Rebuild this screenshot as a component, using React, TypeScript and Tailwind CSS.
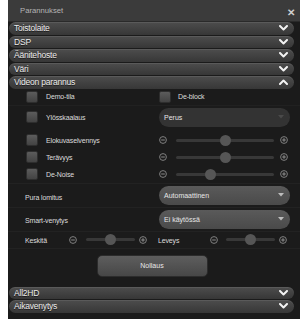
import React from "react";

const font = { fontFamily: '"Liberation Sans", Arial, sans-serif' };

function Chevron({ up = false }: { up?: boolean }) {
  return (
    <svg width="9" height="6" viewBox="0 0 9 6" className="shrink-0">
      <polyline
        points={up ? "1,5 4.5,1.5 8,5" : "1,1 4.5,4.5 8,1"}
        fill="none"
        stroke="#f2f2f2"
        strokeWidth="2"
        strokeLinecap="round"
        strokeLinejoin="round"
      />
    </svg>
  );
}

function SectionRow({ title, open = false }: { title: string; open?: boolean }) {
  return (
    <div className="h-[12.5px] rounded-full bg-gradient-to-b from-[#4d4d4d] to-[#373737] flex items-center justify-between pl-[5px] pr-[6px] shadow-[inset_0_1px_0_rgba(255,255,255,0.08)]">
      <span className="text-[8.5px] leading-none text-[#ececec] tracking-[-0.2px] [text-shadow:0_1px_0_rgba(0,0,0,0.6)]">
        {title}
      </span>
      <Chevron up={open} />
    </div>
  );
}

function Checkbox() {
  return (
    <div className="w-[12px] h-[12px] rounded-[2px] bg-gradient-to-b from-[#5c5c5c] to-[#434343] border border-[#2e2e2e] shrink-0" />
  );
}

function Circle({ plus = false }: { plus?: boolean }) {
  return (
    <svg width="8" height="8" viewBox="0 0 8 8" className="shrink-0">
      <circle cx="4" cy="4" r="3.4" fill="none" stroke="#8a8a8a" strokeWidth="0.9" />
      <line x1="2.2" y1="4" x2="5.8" y2="4" stroke="#9a9a9a" strokeWidth="0.9" />
      {plus && <line x1="4" y1="2.2" x2="4" y2="5.8" stroke="#9a9a9a" strokeWidth="0.9" />}
    </svg>
  );
}

function Slider({ track, pos, gapL, gapR }: { track: string; pos: number; gapL: string; gapR: string }) {
  return (
    <div className="flex items-center">
      <Circle />
      <div className={`relative h-[3px] rounded-full bg-[#383838] ${track} ${gapL}`}>
        <div
          className="absolute top-1/2 w-[11px] h-[11px] -mt-[5.5px] -ml-[5.5px] rounded-full bg-[#565656]"
          style={{ left: `${pos * 100}%` }}
        />
      </div>
      <div className={gapR}>
        <Circle plus />
      </div>
    </div>
  );
}

function Dropdown({ value, dim = false }: { value: string; dim?: boolean }) {
  return (
    <div
      className={`w-[131px] h-[19px] rounded-full flex items-center justify-between pl-[5px] pr-[6px] ${
        dim ? "bg-[#333333]" : "bg-gradient-to-b from-[#5a5a5a] to-[#4a4a4a]"
      }`}
    >
      <span className="text-[7px] leading-none text-[#e6e6e6]">{value}</span>
      <svg width="6" height="4" viewBox="0 0 6 4">
        <polygon points="0,0 6,0 3,3.5" fill={dim ? "#4a4a4a" : "#bdbdbd"} />
      </svg>
    </div>
  );
}

function Label({ children }: { children: React.ReactNode }) {
  return <span className="text-[7px] leading-none text-[#dcdcdc] tracking-[-0.15px]">{children}</span>;
}

export default function App() {
  return (
    <div className="w-[303px] h-[323px] bg-white pl-[8px] pr-[3px] pb-[4px]" style={font}>
      <div className="h-full bg-[#1b1b1b] flex flex-col">
        <div className="h-[22px] shrink-0 bg-[#3b3b3b] border-b border-[#2a2a2a] flex items-start justify-between pl-[12px] pr-[5px]">
          <span className="mt-[7px] text-[7.7px] leading-none text-[#b4b4b4]">Parannukset</span>
          <span className="mt-[8px] text-[10px] leading-none font-bold text-[#cfcfcf]">✕</span>
        </div>

        <div className="flex flex-col gap-px pl-px pr-[6px]">
          <SectionRow title="Toistolaite" />
          <SectionRow title="DSP" />
          <SectionRow title="Äänitehoste" />
          <SectionRow title="Väri" />
          <SectionRow title="Videon parannus" open />
        </div>

        <div className="flex flex-col">
          <div className="h-[17px] flex items-center pl-[18px] border-b border-[#212121]">
            <div className="w-[133px] flex items-center gap-[8px]">
              <Checkbox />
              <Label>Demo-tila</Label>
            </div>
            <div className="flex items-center gap-[7px]">
              <Checkbox />
              <Label>De-block</Label>
            </div>
          </div>

          <div className="h-[26px] flex items-start pt-[2px] pl-[18px]">
            <div className="w-[133px] h-[19px] flex items-center gap-[8px]">
              <Checkbox />
              <Label>Ylösskaalaus</Label>
            </div>
            <Dropdown value="Perus" dim />
          </div>

          {["Elokuvaselvennys", "Terävyys", "De-Noise"].map((name, i) => (
            <div key={name} className="h-[17px] flex items-center pl-[18px]">
              <div className="w-[133px] flex items-center gap-[8px]">
                <Checkbox />
                <Label>{name}</Label>
              </div>
              <Slider track="w-[98px]" pos={i === 2 ? 0.35 : 0.5} gapL="ml-[9px]" gapR="ml-[6px]" />
            </div>
          ))}

          <div className="h-[24px] flex items-center pl-[17px] border-t border-[#222222]">
            <div className="w-[134px]">
              <Label>Pura lomitus</Label>
            </div>
            <Dropdown value="Automaattinen" />
          </div>

          <div className="h-[24px] flex items-center pl-[17px] border-t border-[#222222]">
            <div className="w-[134px] -mt-[2px]">
              <Label>Smart-venytys</Label>
            </div>
            <Dropdown value="Ei käytössä" />
          </div>

          <div className="h-[18px] flex items-center pl-[17px] border-t border-b border-[#222222]">
            <div className="w-[44px] -mt-[3px]">
              <Label>Keskitä</Label>
            </div>
            <Slider track="w-[49px]" pos={0.5} gapL="ml-[9px]" gapR="ml-[4px]" />
            <div className="w-[52px] ml-[11px] -mt-[3px]">
              <Label>Leveys</Label>
            </div>
            <Slider track="w-[49px]" pos={0.5} gapL="ml-[8px]" gapR="ml-[4px]" />
          </div>

          <div className="flex justify-center pt-[6px] pb-[10px] pr-[4px]">
            <button className="w-[111px] h-[22px] rounded-[5px] bg-gradient-to-b from-[#5e5e5e] to-[#474747] border border-[#2c2c2c] text-[7px] leading-none text-[#e8e8e8]">
              Nollaus
            </button>
          </div>
        </div>

        <div className="flex flex-col gap-px pl-px pr-[6px]">
          <SectionRow title="All2HD" />
          <SectionRow title="Aikavenytys" />
        </div>
      </div>
    </div>
  );
}
